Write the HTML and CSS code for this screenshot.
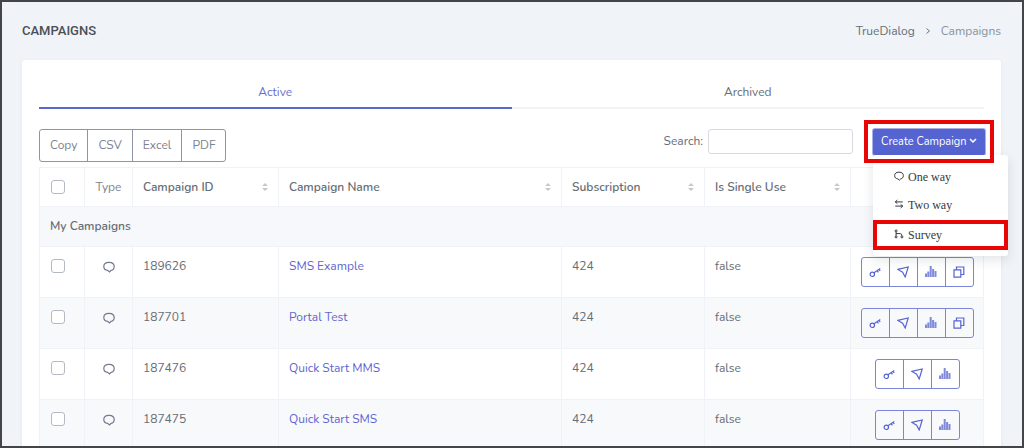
FILE: index.html
```html
<!DOCTYPE html>
<html lang="en">
<head>
<meta charset="utf-8">
<meta name="viewport" content="width=device-width, initial-scale=1">
<title>Campaigns</title>
<link rel="stylesheet" href="styles.css">
</head>
<body>
<svg class="sprite" aria-hidden="true">
  <symbol id="bubble" viewBox="0 0 12 12"><path d="M4.600 9.400C2.200 9.200.8 7.900.8 5.500S2.300 1.400 6 1.400s5.200 1.700 5.200 4.100c0 2.200-1.100 3.600-3.100 3.900L6.500 11z"/></symbol>
  <symbol id="swap" viewBox="0 0 12 12"><path d="M10.500 3.500H1.500M4 1.200 1.500 3.500 4 5.500M1.500 8.500H10.500M8 6.500l2.500 2L8 10.800"/></symbol>
  <symbol id="branch" viewBox="0 0 12 12"><circle cx="2.500" cy="2.300" r="1.200"/><circle cx="2.500" cy="9.500" r="1.200"/><circle cx="9.500" cy="9.500" r="1.200"/><path d="M2.500 3.600v4.600M2.500 5.500h5q2 0 2 2.700"/></symbol>
  <symbol id="key" viewBox="0 0 12 12"><circle cx="3.300" cy="8.300" r="2.200"/><path d="M5 6.800 11.300 2.400M8.200 4.600l1.200 1.800M10 3.300l1.200 1.700"/></symbol>
  <symbol id="send" viewBox="0 0 12 12"><path d="M.8 3.400 11.200 1 8.200 11 5.600 6.300z"/></symbol>
  <symbol id="bars" viewBox="0 0 12 12"><path class="solid" d="M0 7.500h2V11H0zM2.300 5.500h2V11H2.300zM4.700 0h2v11H4.700zM7.100 3h2v8H7.100zM9.500 5h2v6H9.500z"/></symbol>
  <symbol id="copy" viewBox="0 0 12 12"><path d="M1 3.800h6.800v7.400H1zM3.500 3.800V1h7.300v7.500h-3"/></symbol>
</svg>
<div class="page">
  <header class="page-header">
    <h1>CAMPAIGNS</h1>
    <nav class="breadcrumb" aria-label="Breadcrumb">
      <a href="#">TrueDialog</a>
      <svg class="chevron" viewBox="0 0 6 8" aria-hidden="true"><path d="M1.500 1.500 4.500 4 1.500 6.500"/></svg>
      <span>Campaigns</span>
    </nav>
  </header>
  <main class="card">
    <nav class="tabs">
      <a class="tab active" href="#active">Active</a>
      <a class="tab" href="#archived">Archived</a>
    </nav>
    <div class="toolbar">
      <div class="export">
        <button type="button">Copy</button><button type="button">CSV</button><button type="button">Excel</button><button type="button">PDF</button>
      </div>
      <div class="tools">
        <label for="search">Search:</label>
        <input id="search" class="search" type="text">
        <div class="create">
          <button class="create-button" type="button" aria-expanded="true">Create Campaign
            <svg class="caret" viewBox="0 0 8 6" aria-hidden="true"><path d="M1 1 4 4 7 1"/></svg>
          </button>
          <div class="menu">
            <a href="#one"><svg class="icon"><use href="#bubble"/></svg>One way</a>
            <a href="#two"><svg class="icon"><use href="#swap"/></svg>Two way</a>
            <a class="marked" href="#survey"><svg class="icon"><use href="#branch"/></svg>Survey</a>
          </div>
        </div>
      </div>
    </div>
    <table>
      <colgroup><col class="c-check"><col class="c-type"><col class="c-id"><col><col class="c-sub"><col class="c-single"><col class="c-actions"></colgroup>
      <thead>
        <tr>
          <th><input type="checkbox" aria-label="Select all"></th>
          <th class="type">Type</th>
          <th><span class="sortable">Campaign ID<svg class="sort" viewBox="0 0 6 8"><path d="M3 0 6 3H0zM3 8 0 5h6z"/></svg></span></th>
          <th><span class="sortable">Campaign Name<svg class="sort" viewBox="0 0 6 8"><path d="M3 0 6 3H0zM3 8 0 5h6z"/></svg></span></th>
          <th><span class="sortable">Subscription<svg class="sort" viewBox="0 0 6 8"><path d="M3 0 6 3H0zM3 8 0 5h6z"/></svg></span></th>
          <th><span class="sortable">Is Single Use<svg class="sort" viewBox="0 0 6 8"><path d="M3 0 6 3H0zM3 8 0 5h6z"/></svg></span></th>
          <th></th>
        </tr>
      </thead>
      <tbody>
        <tr class="group"><td colspan="7">My Campaigns</td></tr>
        <tr>
          <td><input type="checkbox" aria-label="Select 189626"></td>
          <td class="type"><svg class="icon"><use href="#bubble"/></svg></td>
          <td>189626</td><td><a href="#189626">SMS Example</a></td><td>424</td><td>false</td>
          <td class="actions"><div class="group-buttons"><button type="button" aria-label="Key"><svg class="icon"><use href="#key"/></svg></button><button type="button" aria-label="Send"><svg class="icon"><use href="#send"/></svg></button><button type="button" aria-label="Report"><svg class="icon"><use href="#bars"/></svg></button><button type="button" aria-label="Copy"><svg class="icon"><use href="#copy"/></svg></button></div></td>
        </tr>
        <tr class="striped">
          <td><input type="checkbox" aria-label="Select 187701"></td>
          <td class="type"><svg class="icon"><use href="#bubble"/></svg></td>
          <td>187701</td><td><a href="#187701">Portal Test</a></td><td>424</td><td>false</td>
          <td class="actions"><div class="group-buttons"><button type="button" aria-label="Key"><svg class="icon"><use href="#key"/></svg></button><button type="button" aria-label="Send"><svg class="icon"><use href="#send"/></svg></button><button type="button" aria-label="Report"><svg class="icon"><use href="#bars"/></svg></button><button type="button" aria-label="Copy"><svg class="icon"><use href="#copy"/></svg></button></div></td>
        </tr>
        <tr>
          <td><input type="checkbox" aria-label="Select 187476"></td>
          <td class="type"><svg class="icon"><use href="#bubble"/></svg></td>
          <td>187476</td><td><a href="#187476">Quick Start MMS</a></td><td>424</td><td>false</td>
          <td class="actions"><div class="group-buttons"><button type="button" aria-label="Key"><svg class="icon"><use href="#key"/></svg></button><button type="button" aria-label="Send"><svg class="icon"><use href="#send"/></svg></button><button type="button" aria-label="Report"><svg class="icon"><use href="#bars"/></svg></button></div></td>
        </tr>
        <tr class="striped">
          <td><input type="checkbox" aria-label="Select 187475"></td>
          <td class="type"><svg class="icon"><use href="#bubble"/></svg></td>
          <td>187475</td><td><a href="#187475">Quick Start SMS</a></td><td>424</td><td>false</td>
          <td class="actions"><div class="group-buttons"><button type="button" aria-label="Key"><svg class="icon"><use href="#key"/></svg></button><button type="button" aria-label="Send"><svg class="icon"><use href="#send"/></svg></button><button type="button" aria-label="Report"><svg class="icon"><use href="#bars"/></svg></button></div></td>
        </tr>
      </tbody>
    </table>
  </main>
</div>
</body>
</html>
```
FILE: styles.css
```css
* { box-sizing: border-box; }
body {
  margin: 0;
  font: 12px/20px Nunito, Lato, sans-serif;
  color: #656d75;
  background: #f0f3f7;
}
a { color: inherit; text-decoration: none; }
button, input { font: inherit; }
.sprite { position: absolute; width: 0; height: 0; }
.icon {
  width: 12px;
  height: 12px;
  fill: none;
  stroke: currentColor;
  stroke-width: 1.2;
}
.solid { fill: currentColor; stroke: none; opacity: 0.75; }

.page {
  height: 100vh;
  overflow: hidden;
  border: 2px solid #444549;
  padding: 0 21px 0 20px;
}
.page-header {
  display: flex;
  align-items: center;
  justify-content: space-between;
  height: 58px;
}
h1 {
  margin: 0;
  font: 500 13px/20px Roboto, sans-serif;
  color: #495057;
}
.breadcrumb { display: flex; align-items: center; gap: 10px; }
.breadcrumb span { color: #8a929c; }
.chevron { width: 6px; height: 8px; fill: none; stroke: #6c757d; }

.card {
  min-height: 500px;
  padding: 17px;
  background: #fff;
  border-radius: 3px;
  box-shadow: 0 1px 4px rgba(30, 40, 60, 0.06);
}
.tabs { display: flex; }
.tab {
  flex: 1;
  padding: 5px 0;
  border-bottom: 2px solid #f3f4f8;
  text-align: center;
}
.tab.active { color: #6a6ed0; border-color: #5b69cf; }
.toolbar {
  display: flex;
  justify-content: space-between;
  align-items: flex-start;
  margin: 20px -1px 0 0;
  height: 38px;
}
.export { display: flex; }
.export button {
  height: 33px;
  padding: 0 10px 2px;
  margin-right: -1px;
  border: 1px solid #8f94a6;
  background: #fff;
  color: #7c8190;
}
.export button:first-child, .group-buttons button:first-child { border-radius: 3px 0 0 3px; }
.export button:last-child, .group-buttons button:last-child { border-radius: 0 3px 3px 0; }
.tools { display: flex; align-items: flex-start; }
.tools label { padding: 2px 5px 0 0; }
.search {
  width: 145px;
  height: 25px;
  margin-right: 20px;
  border: 1px solid #d5d9e2;
  border-radius: 3px;
}
.create { position: relative; }
.create-button {
  display: flex;
  align-items: center;
  justify-content: space-between;
  width: 112px;
  height: 26px;
  padding: 0 8px;
  border: 0;
  border-radius: 2px;
  background: #5664d2;
  box-shadow: 0 0 0 1px #a9b0e6;
  color: #fff;
  font-size: 11px;
}
.caret { width: 8px; height: 6px; margin-bottom: 3px; fill: none; stroke: #fff; stroke-width: 1.5; }
.create::after {
  content: "";
  position: absolute;
  z-index: 3;
  inset: -9px -9px -8px;
  border: 4px solid #e80505;
  pointer-events: none;
}
.menu {
  position: absolute;
  z-index: 2;
  top: 100%;
  left: 0;
  width: 135px;
  padding: 8px 0 6px;
  background: #fff;
  border-radius: 3px;
  box-shadow: 0 4px 12px rgba(30, 40, 60, 0.12);
  font: 12px/20px "Liberation Serif", serif;
  color: #343a40;
}
.menu a {
  display: flex;
  gap: 4px;
  padding: 4px 21px;
}
.menu a .icon { width: 10px; height: 10px; margin-top: 4px; }
.menu .marked { outline: 4px solid #e80505; outline-offset: -4px; margin-top: 1px; padding: 5px 21px; }

table {
  width: 100%;
  border-collapse: collapse;
  table-layout: fixed;
}
th, td {
  padding: 9px 10px 10px;
  border: 1px solid #eff2f7;
  text-align: left;
  vertical-align: top;
}
th { font-weight: 600; padding-bottom: 9px; }
.c-check { width: 45px; }
.c-type { width: 48px; }
.c-id { width: 146px; }
.c-sub { width: 143px; }
.c-single { width: 146px; }
.c-actions { width: 133px; }
td a { color: #6066d0; }
th.type { font-weight: 400; color: #7c8190; }
.type { text-align: center; }
.type .icon { display: block; margin: 5px auto 0; color: #74788d; }
.sortable { display: flex; justify-content: space-between; align-items: center; }
.sort { width: 6px; height: 8px; fill: #c5c8ce; }
.group td { background: #f7f8fb; font-weight: 600; }
.striped { background: #f8f9fb; }
input[type="checkbox"] {
  display: block;
  appearance: none;
  width: 14px;
  height: 14px;
  margin: 3px 1px;
  border: 1px solid #b4bac4;
  border-radius: 3px;
  background: #fff;
}
.actions { padding: 10px 0; }
.group-buttons { display: flex; justify-content: center; }
.group-buttons button {
  display: flex;
  align-items: center;
  justify-content: center;
  width: 29px;
  height: 30px;
  padding: 0;
  border: 1px solid #7b85da;
  background: transparent;
  color: #5664d2;
}
.group-buttons button + button { margin-left: -1px; }
```
